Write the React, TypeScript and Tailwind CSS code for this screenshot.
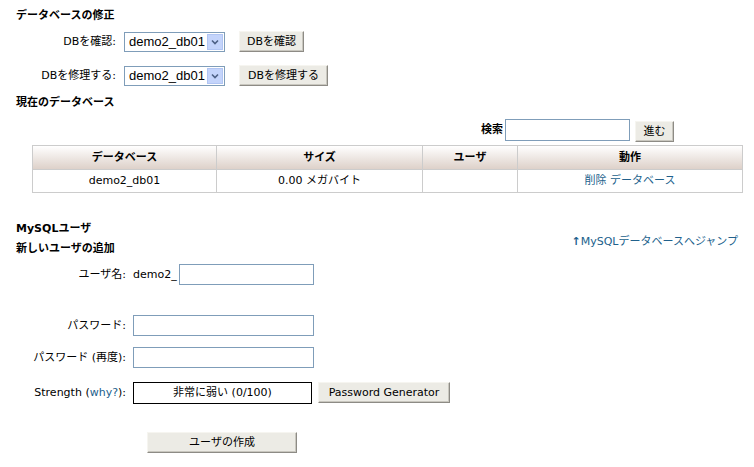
import React from "react"

const btn =
  "h-[21px] border border-[#f6f5f0] border-r-[#8d8b85] border-b-[#8d8b85] bg-[#ecebe5] shadow-[inset_-1px_-1px_0_#c9c7bf] text-[11px] text-black leading-none flex items-center justify-center"

const input = "h-[21px] border border-[#7f9db9] bg-white"

function FakeSelect({ value }: { value: string }) {
  return (
    <div className="w-[101px] h-[20px] border border-[#7f9db9] bg-white flex items-center justify-between pl-[4px] pr-[1px]">
      <span className="font-['Liberation_Sans',sans-serif] text-[13px] leading-none">{value}</span>
      <span className="w-[16px] h-[16px] bg-[#c4d4fb] border border-[#b1c5f3] flex items-center justify-center">
        <svg width="8" height="6" viewBox="0 0 8 6">
          <path d="M1 1.5 L4 4.5 L7 1.5" fill="none" stroke="#4d6185" strokeWidth="1.6" />
        </svg>
      </span>
    </div>
  )
}

function DbRow({ label, action, width }: { label: string; action: string; width: string }) {
  return (
    <div className="flex items-center h-[21px]">
      <div className="w-[100px] text-right">{label}:</div>
      <div className="ml-[8px]">
        <FakeSelect value="demo2_db01" />
      </div>
      <button className={`${btn} ${width} ml-[14px]`}>{action}</button>
    </div>
  )
}

export default function App() {
  return (
    <div className="w-[754px] h-[467px] bg-white text-black text-[11px] leading-[14px] px-[16px] pt-[9px] font-['DejaVu_Sans','Noto_Sans_CJK_JP',sans-serif]">
      <h3 className="font-bold">データベースの修正</h3>

      <div className="mt-[8px]">
        <DbRow label="DBを確認" action="DBを確認" width="w-[65px]" />
      </div>
      <div className="mt-[13px]">
        <DbRow label="DBを修理する" action="DBを修理する" width="w-[89px]" />
      </div>

      <h3 className="font-bold mt-[10px]">現在のデータベース</h3>

      {/* search */}
      <div className="mt-[8px] flex items-center justify-end pr-[64px] h-[23px]">
        <span className="font-bold mr-[2px]">検索</span>
        <div className={`${input} w-[125px] h-[22px]`} />
        <button className={`${btn} w-[39px] ml-[5px] mt-[3px]`}>進む</button>
      </div>

      <table className="mt-[4px] ml-[16px] w-[711px] border-collapse border border-[#cccccc] text-center">
        <thead>
          <tr className="h-[24px] bg-gradient-to-b from-white to-[#dccfc7]">
            <th className="w-[184px] border border-[#cccccc] font-bold">データベース</th>
            <th className="w-[206px] border border-[#cccccc] font-bold">サイズ</th>
            <th className="w-[95px] border border-[#cccccc] font-bold">ユーザ</th>
            <th className="border border-[#cccccc] font-bold">動作</th>
          </tr>
        </thead>
        <tbody>
          <tr className="h-[23px] font-normal">
            <td className="border border-[#cccccc]">demo2_db01</td>
            <td className="border border-[#cccccc]">0.00 メガバイト</td>
            <td className="border border-[#cccccc]"></td>
            <td className="border border-[#cccccc] text-[#21618c]">削除 データベース</td>
          </tr>
        </tbody>
      </table>

      <div className="mt-[29px] flex justify-between items-center">
        <div>
          <h3 className="font-bold">MySQLユーザ</h3>
          <h3 className="font-bold mt-[6px]">新しいユーザの追加</h3>
        </div>
        <a className="text-[#21618c] pt-[5px]">
          <span className="font-bold">↑</span>MySQLデータベースへジャンプ
        </a>
      </div>

      {/* new user form */}
      <div className="mt-[8px] flex items-center h-[21px]">
        <div className="w-[110px] text-right">ユーザ名:</div>
        <span className="ml-[7px]">demo2_</span>
        <div className={`${input} w-[135px] ml-[2px]`} />
      </div>

      <div className="mt-[30px] flex items-center h-[21px]">
        <div className="w-[110px] text-right">パスワード:</div>
        <div className={`${input} w-[181px] ml-[7px]`} />
      </div>

      <div className="mt-[11px] flex items-center h-[21px]">
        <div className="w-[110px] text-right">パスワード (再度):</div>
        <div className={`${input} w-[181px] ml-[7px]`} />
      </div>

      <div className="mt-[14px] flex items-center h-[22px]">
        <div className="w-[110px] text-right">
          Strength (<span className="text-[#21618c]">why?</span>):
        </div>
        <div className="ml-[7px] w-[179px] h-[22px] border border-black flex items-center justify-center">
          非常に弱い (0/100)
        </div>
        <button className={`${btn} w-[132px] ml-[6px] -mt-[2px]`}>Password Generator</button>
      </div>

      <button className={`${btn} w-[150px] ml-[131px] mt-[28px]`}>ユーザの作成</button>
    </div>
  )
}
